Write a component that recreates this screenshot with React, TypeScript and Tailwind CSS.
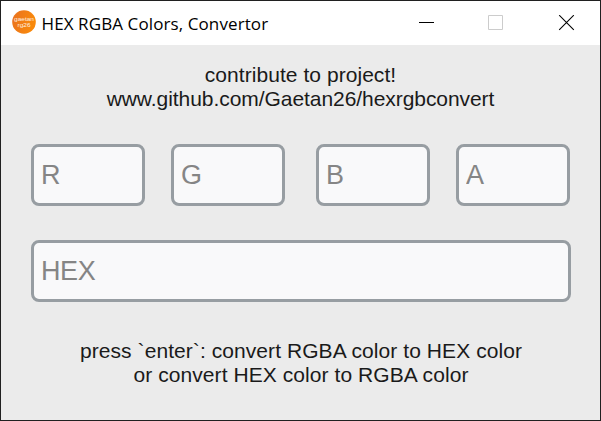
const inputBox =
  "h-[62px] rounded-[8px] border-[3px] border-[#979da2] bg-[#f9f9fa] px-[7px] font-['Liberation_Sans',Arial,sans-serif] text-[27px] leading-none tracking-[-0.4px] text-[#1a1a1a] placeholder:text-[#858585] outline-none";

function TitleBar() {
  return (
    <header className="flex h-[44px] shrink-0 items-center bg-white">
      <svg className="-mt-[2px] ml-[11px] h-6 w-6" viewBox="0 0 24 24" fontFamily="Liberation Sans, Arial, sans-serif" fontSize="5.8" fill="#fff0e0">
        <defs>
          <linearGradient id="disc" x1="0" y1="0" x2="1" y2="0.3">
            <stop offset="0" stopColor="#e9711f" />
            <stop offset="1" stopColor="#f98a0c" />
          </linearGradient>
        </defs>
        <circle cx="12" cy="12" r="11.8" fill="url(#disc)" />
        <text x="2" y="10.6" textLength="20" lengthAdjust="spacingAndGlyphs">gaetan</text>
        <text x="5.5" y="17.4" textLength="13" lengthAdjust="spacingAndGlyphs">rg26</text>
      </svg>
      <h1 className="ml-[5.5px] mt-px whitespace-nowrap font-['Open_Sans',sans-serif] text-[17px] tracking-[0.1px] text-black">
        HEX RGBA Colors, Convertor
      </h1>
      <svg className="ml-auto mr-[25px] h-4 w-[156px] shrink-0" viewBox="0 0 156 16" fill="none">
        <path d="M0 7.5H15" stroke="#000" />
        <path d="M69.5 0.5H83.5V14.5H69.5Z" stroke="#ccc" />
        <path d="M140.2 0.2L154.8 14.8M154.8 0.2L140.2 14.8" stroke="#000" strokeWidth="1.1" />
      </svg>
    </header>
  );
}

export default function App() {
  return (
    <div className="flex h-[421px] w-[601px] flex-col overflow-hidden border border-[#202020] bg-[#ebebeb] font-['Liberation_Sans',Arial,sans-serif] text-[21px] leading-6 text-[#1a1a1a]">
      <TitleBar />
      <p className="mt-[18px] text-center">
        <span className="tracking-[0.05px]">contribute to project!</span>
        <br />
        <span className="tracking-[-0.06px]">www.github.com/Gaetan26/hexrgbconvert</span>
      </p>
      <div className="mt-[33px] flex pl-[30px]">
        <input className={`${inputBox} w-[114px]`} placeholder="R" />
        <input className={`${inputBox} ml-[26px] w-[114px]`} placeholder="G" />
        <input className={`${inputBox} ml-[31px] w-[114px]`} placeholder="B" />
        <input className={`${inputBox} ml-[26px] w-[114px]`} placeholder="A" />
      </div>
      <input className={`${inputBox} ml-[30px] mt-[34px] w-[540px] shrink-0`} placeholder="HEX" />
      <p className="mt-[37px] pl-px text-center tracking-[0.07px]">
        press `enter`: convert RGBA color to HEX color
        <br />
        or convert HEX color to RGBA color
      </p>
    </div>
  );
}
